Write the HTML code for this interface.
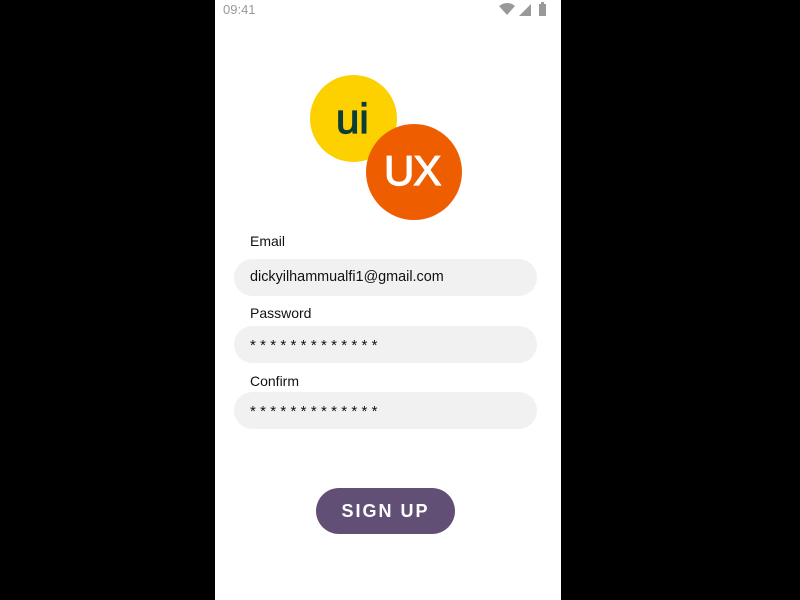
<!DOCTYPE html>
<html><head><meta charset="utf-8"><style>
body{margin:0;width:800px;height:600px;background:#000;position:relative;overflow:hidden;font-family:"Liberation Sans",sans-serif}
.ph{position:absolute;left:215px;top:0;width:346px;height:600px;background:#fff}
.a{position:absolute}
.lbl{position:absolute;left:35px;font-size:14px;color:#111}
.f{position:absolute;left:19px;width:303px;height:37px;border-radius:19px;background:#f1f1f1;font-size:14.4px;color:#111;line-height:37px;padding-left:16px;box-sizing:border-box}
.st{letter-spacing:4.3px;font-size:15px;line-height:40px}
</style></head><body>
<div class="ph">
<div class="a" style="left:8px;top:2px;font-size:13px;color:#999">09:41</div>
<svg class="a" style="left:284px;top:2px" width="52" height="14" viewBox="0 0 52 14">
<path d="M0 4 Q8 -2 16 4 L8 13Z" fill="#999"/>
<path d="M20 14 L32 2 L32 14Z" fill="#999"/>
<rect x="40" y="2" width="7" height="12" fill="#999"/><rect x="42" y="0" width="3" height="2" fill="#999"/>
</svg>
<div class="a" style="left:95px;top:75px;width:87px;height:87px;border-radius:50%;background:#fdd000"></div>
<div class="a" style="left:121px;top:95px;font-size:42px;color:#0d3d3a;-webkit-text-stroke:1.2px #0d3d3a">ui</div>
<div class="a" style="left:151px;top:124px;width:96px;height:96px;border-radius:50%;background:#ee5e00"></div>
<div class="a" style="left:169px;top:147px;font-size:42px;color:#fff;letter-spacing:-1px;-webkit-text-stroke:1.2px #fff">UX</div>
<div class="lbl" style="top:233px">Email</div>
<div class="f" style="top:259px">dickyilhammualfi1@gmail.com</div>
<div class="lbl" style="top:305px">Password</div>
<div class="f st" style="top:326px">*************</div>
<div class="lbl" style="top:373px">Confirm</div>
<div class="f st" style="top:392px">*************</div>
<div class="a" style="left:101px;top:488px;width:139px;height:46px;border-radius:23px;background:#614f76;color:#fff;font-weight:bold;font-size:18px;letter-spacing:2px;text-align:center;line-height:47px">SIGN UP</div>
</div>
</body></html>
